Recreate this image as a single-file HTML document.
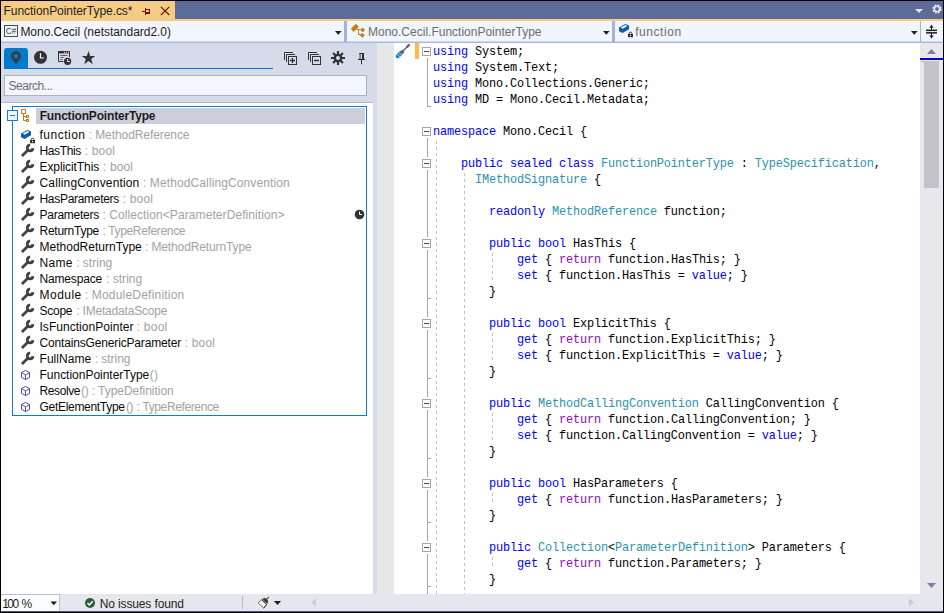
<!DOCTYPE html>
<html lang="en"><head><meta charset="utf-8"><title>FunctionPointerType.cs</title>
<style>
html,body{margin:0;padding:0;}
body{width:944px;height:613px;overflow:hidden;background:#000;position:relative;font-family:'Liberation Sans',sans-serif;font-size:12px;}
#app{position:absolute;left:0;top:0;width:944px;height:613px;overflow:hidden;background:#000;}
#app div,#app span,#app svg{position:absolute;}
.t{white-space:pre;line-height:16px;height:16px;}
/* frame */
#tabstrip{left:1px;top:1px;width:942px;height:18px;background:#5d6b99;}
#tab{left:0;top:0;width:174px;height:18px;background:#f5cc84;}
#tabline{left:1px;top:19px;width:942px;height:2px;background:#f5cc84;}
#nav{left:1px;top:21px;width:942px;height:20px;background:#f1f5fd;}
#navb{left:1px;top:41px;width:942px;height:2px;background:linear-gradient(#e2e9f7,#97aad6);}
.nsep{top:21px;width:3px;height:21px;background:#a3b3d8;}
#panel{left:1px;top:43px;width:376px;height:551px;background:#d6dbe9;}
#treebg{left:1px;top:103px;width:372px;height:491px;background:#fff;}
#treetop{left:1px;top:102px;width:372px;height:1px;background:#b3bacb;}
#ptab{left:4px;top:48px;width:24px;height:21px;background:#007acc;border-radius:3px 3px 0 0;}
#pline{left:4px;top:68px;width:269px;height:1px;background:#007acc;}
#search{left:4px;top:75px;width:361px;height:19px;background:#f3f6fd;border:1px solid #a9b3c6;}
#focus{left:12px;top:106px;width:353px;height:308px;border:1px solid #0e7ad1;}
#sel{left:36px;top:108px;width:329px;height:16px;background:#cccedb;}
#exp{left:7px;top:110px;width:9px;height:9px;border:1px solid #1c7cd5;background:#eef4fc;}
#exp i{position:absolute;left:2px;top:4px;width:5px;height:1px;background:#1c7cd5;}
/* editor */
#emargin{left:377px;top:43px;width:17px;height:551px;background:#e6e7e8;}
#editor{left:394px;top:43px;width:526px;height:551px;background:#fff;}
#chg{left:414px;top:43px;width:6px;height:16px;background:#ffffc8;}
#chg i{position:absolute;left:1px;top:0;width:4px;height:16px;background:#ffb862;}
.cl{left:433px;height:16px;line-height:16px;white-space:pre;font-family:'Liberation Mono',monospace;font-size:11.9px;letter-spacing:-0.14px;color:#000;}
.cl span{position:static !important;}
.k{color:#0000ff}.ty{color:#2b91af}.c{color:#8f08c4}
.ob{left:422px;width:7px;height:7px;border:1px solid #a6a6a6;background:#fff;box-shadow:0 -2px 0 #fff,0 2px 0 #fff;z-index:1;}
.ob i{position:absolute;left:1px;top:3px;width:5px;height:1px;background:#4a4a4a;}
.ov{left:427px;width:1px;background:#a5a5a5;}
.ot{left:427px;width:4px;height:1px;background:#a5a5a5;}
.ig{width:1px;background:repeating-linear-gradient(to bottom,#c2c2c2 0,#c2c2c2 3px,transparent 3px,transparent 6px);}
/* scrollbar */
#vs{left:920px;top:43px;width:23px;height:551px;background:#e8e8ec;}
#vthumb{left:924px;top:61px;width:15px;height:127px;background:#c2c3c9;}
#caret{left:920px;top:58px;width:23px;height:2px;background:#0000cd;}
#omark{left:921px;top:61px;width:4px;height:1px;background:#ffb040;}
/* bottom */
#bottom{left:1px;top:594px;width:942px;height:17px;background:#e6e7ec;}
#zoom{left:1px;top:594px;width:58px;height:16px;background:#fcfdff;border-right:1px solid #b4c0dc;border-top:1px solid #b4c0dc;}
#bsep{left:242px;top:596px;width:1px;height:13px;background:#b9bccb;}
#bline{left:1px;top:611px;width:942px;height:1px;background:#46558c;}
.ic{overflow:visible;}
</style></head><body>
<svg width="0" height="0" style="position:absolute"><defs>
<g id="i-wrench" fill="none" stroke="#424242"><path d="M12.9 6.1 A2.8 2.8 0 1 1 10.1 3.2" stroke-width="2.7"/><path d="M8.3 7.7 L1.9 14.1" stroke-width="2.8"/></g>
<g id="i-cube" fill="none" stroke="#5a4ca6" stroke-width="1" stroke-linejoin="round"><path d="M5.500 4.400 L9.500 6.600 L9.500 11.400 L5.500 13.600 L1.500 11.400 L1.500 6.600 Z M1.500 6.600 L5.500 8.900 L9.500 6.600 M5.500 8.900 L5.500 13.600"/></g>
<g id="i-field"><path d="M1 7.6 L7.4 4 L11 5.6 L11 9.2 L4.6 13 L1 11.2 Z" fill="#0f5bb0"/><path d="M2.7 7.6 L7.4 5 L9.4 5.9 L4.7 8.7 Z" fill="#eef3fb"/><g id="i-lock"><rect x="10" y="14" width="5" height="3.2" fill="#333"/><path d="M11.1 14.2 V13.5 a1.4 1.4 0 0 1 2.8 0 V14.2" fill="none" stroke="#333" stroke-width="1"/><rect x="12" y="15" width="1" height="1.2" fill="#fff"/></g></g>
<g id="i-dd"><path d="M0 0 H6.6 L3.3 3.7 Z"/></g>
</defs></svg>
<div id="app">
<div id="tabstrip"><div id="tab"></div></div>
<div id="tabline"></div>
<div id="nav"></div><div id="navb"></div>
<div class="nsep" style="left:344px"></div><div class="nsep" style="left:612px"></div><div class="nsep" style="left:920px;width:1px"></div>
<div id="panel"></div><div id="treetop"></div><div id="treebg"></div>
<div id="ptab"></div><div id="pline"></div>
<div id="search"></div>
<div id="sel"></div><div id="focus"></div><div id="exp"><i></i></div>
<div id="emargin"></div><div id="editor"></div>
<div id="chg"><i></i></div>
<div class="ob" style="top:47px"><i></i></div>
<div class="ov" style="top:56px;height:51px"></div>
<div class="ot" style="top:106px"></div>
<div class="ob" style="top:127px"><i></i></div>
<div class="ov" style="top:136px;height:467px"></div>
<div class="ob" style="top:159px"><i></i></div>
<div class="ob" style="top:239px"><i></i></div>
<div class="ot" style="top:298px"></div>
<div class="ob" style="top:319px"><i></i></div>
<div class="ot" style="top:378px"></div>
<div class="ob" style="top:399px"><i></i></div>
<div class="ot" style="top:458px"></div>
<div class="ob" style="top:479px"><i></i></div>
<div class="ot" style="top:522px"></div>
<div class="ob" style="top:543px"><i></i></div>
<div class="ot" style="top:586px"></div>
<div class="ig" style="left:436px;top:141px;height:453px"></div>
<div class="ig" style="left:464px;top:173px;height:421px"></div>
<div class="ig" style="left:492px;top:253px;height:28px"></div>
<div class="ig" style="left:492px;top:333px;height:28px"></div>
<div class="ig" style="left:492px;top:413px;height:28px"></div>
<div class="ig" style="left:492px;top:493px;height:12px"></div>
<div class="ig" style="left:492px;top:557px;height:12px"></div>
<div class="cl" style="top:44px"><span class="k">using</span> System;</div>
<div class="cl" style="top:60px"><span class="k">using</span> System.Text;</div>
<div class="cl" style="top:76px"><span class="k">using</span> Mono.Collections.Generic;</div>
<div class="cl" style="top:92px"><span class="k">using</span> MD = Mono.Cecil.Metadata;</div>
<div class="cl" style="top:124px"><span class="k">namespace</span> Mono.Cecil {</div>
<div class="cl" style="top:156px">    <span class="k">public sealed class</span> <span class="ty">FunctionPointerType</span> : <span class="ty">TypeSpecification</span>,</div>
<div class="cl" style="top:172px">      <span class="ty">IMethodSignature</span> {</div>
<div class="cl" style="top:204px">        <span class="k">readonly</span> <span class="ty">MethodReference</span> function;</div>
<div class="cl" style="top:236px">        <span class="k">public bool</span> HasThis {</div>
<div class="cl" style="top:252px">            <span class="k">get</span> { <span class="c">return</span> function.HasThis; }</div>
<div class="cl" style="top:268px">            <span class="k">set</span> { function.HasThis = <span class="k">value</span>; }</div>
<div class="cl" style="top:284px">        }</div>
<div class="cl" style="top:316px">        <span class="k">public bool</span> ExplicitThis {</div>
<div class="cl" style="top:332px">            <span class="k">get</span> { <span class="c">return</span> function.ExplicitThis; }</div>
<div class="cl" style="top:348px">            <span class="k">set</span> { function.ExplicitThis = <span class="k">value</span>; }</div>
<div class="cl" style="top:364px">        }</div>
<div class="cl" style="top:396px">        <span class="k">public</span> <span class="ty">MethodCallingConvention</span> CallingConvention {</div>
<div class="cl" style="top:412px">            <span class="k">get</span> { <span class="c">return</span> function.CallingConvention; }</div>
<div class="cl" style="top:428px">            <span class="k">set</span> { function.CallingConvention = <span class="k">value</span>; }</div>
<div class="cl" style="top:444px">        }</div>
<div class="cl" style="top:476px">        <span class="k">public bool</span> HasParameters {</div>
<div class="cl" style="top:492px">            <span class="k">get</span> { <span class="c">return</span> function.HasParameters; }</div>
<div class="cl" style="top:508px">        }</div>
<div class="cl" style="top:540px">        <span class="k">public</span> <span class="ty">Collection</span>&lt;<span class="ty">ParameterDefinition</span>&gt; Parameters {</div>
<div class="cl" style="top:556px">            <span class="k">get</span> { <span class="c">return</span> function.Parameters; }</div>
<div class="cl" style="top:572px">        }</div>
<div id="vs"></div><div id="vthumb"></div><div id="caret"></div><div id="omark"></div>
<div id="bottom"></div><div id="zoom"></div><div id="bsep"></div><div id="bline"></div>
<!-- icons -->
<svg id="icons" style="left:0;top:0" width="944" height="613" viewBox="0 0 944 613">
 <!-- title tab pin + close -->
 <g fill="#6a1215"><rect x="142" y="11" width="3" height="1"/><rect x="145" y="8" width="1" height="7"/><rect x="146" y="9" width="4" height="1"/><rect x="149" y="9" width="1" height="5"/><rect x="146" y="12" width="4" height="2"/></g>
 <path d="M160.9 6.9 L169.3 15 M169.3 6.9 L160.9 15" stroke="#6a1215" stroke-width="1.15" fill="none"/>
 <!-- tabstrip right: dropdown + gear -->
 <path d="M915 9 H923 L919 13 Z" fill="#e3e7f3"/>
 <g transform="translate(937,9)" fill="none" stroke="#e9ecf6"><circle r="3.4" stroke-width="2.4" stroke-dasharray="1.7 0.97" /><circle r="2.6" stroke-width="1.4"/></g>
 <!-- nav: C# icon -->
 <rect x="4.500" y="25.500" width="13" height="11" fill="#f2f3fb" stroke="#3d5c3d"/>
 <text x="5.800" y="34.100" font-family="Liberation Sans, sans-serif" font-size="9.300" fill="#3c3c3c" textLength="10.400" lengthAdjust="spacingAndGlyphs">C#</text>
 <!-- nav dropdown arrows -->
 <g fill="#1e1e1e"><use href="#i-dd" x="335" y="31"/><use href="#i-dd" x="603" y="31"/><use href="#i-dd" x="911" y="31"/></g>
 <!-- nav class icon -->
 <g fill="#c67d17" stroke="none">
  <path d="M350.8 28.8 L355.9 23.8 L358.9 26.8 L353.7 32 Z"/>
  <path d="M362.7 27.6 L365 29.9 L362.7 32.2 L360.4 29.9 Z"/>
  <path d="M362.4 32.9 L364.8 35.3 L362.4 37.7 L360 35.3 Z"/>
  <rect x="356.500" y="29" width="5" height="1"/><rect x="358" y="29" width="1" height="6"/><rect x="358" y="34" width="3.500" height="1"/>
 </g>
 <!-- nav field icon -->
 <g transform="translate(618,20)"><use href="#i-field"/></g>
 <!-- split button icon -->
 <g fill="#1e1e1e"><rect x="926" y="29.600" width="11" height="1.500"/><rect x="926" y="32.100" width="11" height="1.500"/><rect x="931" y="26" width="1" height="4"/><rect x="931" y="33" width="1" height="4.500"/><path d="M929.300 27.700 L931.500 24.800 L933.700 27.700 Z M929.300 35.500 L931.500 38.400 L933.700 35.500 Z"/></g>
 <!-- panel toolbar: location pin -->
 <path d="M16 51 a5 5 0 0 1 5 5 c0 2.6 -2.6 5 -5 8 c-2.4 -3 -5 -5.4 -5 -8 a5 5 0 0 1 5 -5 Z M16 54 a2.3 2.3 0 1 0 0.001 0 Z" fill="#3b3b40" fill-rule="evenodd"/>
 <!-- clock -->
 <circle cx="40.5" cy="57.3" r="6.5" fill="#333337"/><path d="M40.5 53 V58 H44" fill="none" stroke="#f0f0f4" stroke-width="1.2"/>
 <!-- window clock -->
 <path d="M58.5 51.5 H69.5 V57 M58.5 51.5 V61.5 H63.5" fill="none" stroke="#333337"/><rect x="58" y="51" width="12" height="2.4" fill="#333337"/>
 <g fill="#e8e8ee"><rect x="64" y="51.8" width="1" height="1"/><rect x="66" y="51.8" width="1" height="1"/><rect x="68" y="51.8" width="1" height="1"/></g>
 <path d="M60.5 55.5 H67.5 M60.5 57.5 H63.5 M60.5 59.5 H62.5" stroke="#7b4a86" fill="none"/>
 <circle cx="67.6" cy="61.3" r="3.6" fill="#333337"/><path d="M67.6 59 V61.6 H69.8" fill="none" stroke="#f0f0f4" stroke-width="1"/>
 <!-- star -->
 <path d="M88.5 51 L90.2 56 L95.3 56 L91.2 59.1 L92.7 64.2 L88.5 61.1 L84.3 64.2 L85.8 59.1 L81.7 56 L86.8 56 Z" fill="#333337"/>
 <!-- expand all / collapse all -->
 <g fill="none" stroke="#333337" stroke-width="1">
  <path d="M284.5 60 V52.5 H293"/><path d="M286.5 62 V54.5 H295"/><rect x="288.5" y="56.5" width="8" height="8"/><path d="M290 60.500 H295 M292.500 58 V63" stroke-width="1.300"/>
  <path d="M308.5 60 V52.5 H317"/><path d="M310.5 62 V54.5 H319"/><rect x="312.5" y="56.5" width="8" height="8"/><path d="M314 60.500 H319" stroke-width="1.500"/>
 </g>
 <!-- gear -->
 <g transform="translate(338,58)"><g stroke="#333337" stroke-width="2.2"><path d="M0 -7 V7 M-7 0 H7 M-4.95 -4.95 L4.95 4.95 M-4.95 4.95 L4.95 -4.95"/></g><circle r="4.3" fill="#333337"/><circle r="2" fill="#d6dbe9"/></g>
 <!-- pin -->
 <g fill="#2d2d31"><rect x="359.300" y="53" width="4.700" height="1"/><rect x="359.600" y="53" width="0.900" height="6"/><rect x="362" y="53" width="2" height="6"/><rect x="358" y="59" width="7" height="1"/><rect x="361" y="60" width="1" height="4.300"/></g>
 <!-- class icon in tree -->
 <g fill="none" stroke="#c27d1a" stroke-width="1"><rect x="21.5" y="109.500" width="4" height="4"/><path d="M23.5 114 V120.500 H26 M23.5 116.500 H26"/><rect x="26.500" y="115.500" width="2" height="2"/><rect x="26.500" y="119.500" width="2" height="2"/></g>
 <!-- recent clock in tree -->
 <circle cx="359.5" cy="214.500" r="4.800" fill="#333"/><path d="M359.5 211.500 V214.500 H362" fill="none" stroke="#fff" stroke-width="1"/>
 <!-- screwdriver -->
 <path d="M397.700 56.200 L400.600 53.200" stroke="#1b86c5" stroke-width="4.200" stroke-linecap="round" fill="none"/>
 <path d="M398.200 55.700 L400.900 52.900" stroke="#b9c4ee" stroke-width="4.200" stroke-dasharray="0.700 1.700" fill="none"/>
 <path d="M403 51 L407.200 46.800" stroke="#666" stroke-width="1.400" fill="none"/><path d="M407.300 46.700 L408.900 45.100" stroke="#666" stroke-width="2.500" stroke-linecap="round" fill="none"/>
 <path d="M401.500 52.700 L403.300 50.900" stroke="#606060" stroke-width="3.400" fill="none"/>
 <!-- scrollbar arrows -->
 <path d="M927 54 L931.500 49 L936 54 Z" fill="#86799f"/><path d="M927 583 L931.500 588 L936 583 Z" fill="#86799f"/>
 <!-- bottom bar -->
 <g fill="#1e1e1e"><use href="#i-dd" x="50.500" y="601.500"/><path d="M273.900 600.900 H281.100 L277.500 605 Z"/></g>
 <circle cx="90" cy="603" r="5" fill="#2f5d3a"/><path d="M87.500 603 L89.400 605 L92.800 601.200" fill="none" stroke="#fff" stroke-width="1.500"/>
 <path d="M311 602.500 L316 598.500 V606.500 Z" fill="#cccdd4"/><path d="M914 602.500 L909 598.500 V606.500 Z" fill="#c6c9d6"/>
 <!-- brush -->
 <g transform="translate(264,602.200) rotate(42.500)"><path d="M0 -7.200 V-4" stroke="#3a3a3a" stroke-width="1" fill="none"/><path d="M-3.300 -1 A3.300 3.300 0 0 1 3.300 -1 Z" fill="#3c3c3c"/><path d="M-3.500 0 H3.500 L3.900 4.500 H-3.900 Z" fill="#fbfbfb" stroke="#6b3f7a" stroke-width="0.800"/><path d="M3.500 0 L3.900 4.500" stroke="#3c3c3c" stroke-width="0.900"/><path d="M-3.600 -0.300 H3.600" stroke="#3c3c3c" stroke-width="0.900"/></g>
</svg>
<svg class="ic" style="left:20px;top:126px" width="17" height="16" viewBox="0 0 17 16"><use href="#i-field"/></svg>
<svg class="ic" style="left:20px;top:142px" width="16" height="16" viewBox="0 0 16 16"><use href="#i-wrench"/></svg>
<svg class="ic" style="left:20px;top:158px" width="16" height="16" viewBox="0 0 16 16"><use href="#i-wrench"/></svg>
<svg class="ic" style="left:20px;top:174px" width="16" height="16" viewBox="0 0 16 16"><use href="#i-wrench"/></svg>
<svg class="ic" style="left:20px;top:190px" width="16" height="16" viewBox="0 0 16 16"><use href="#i-wrench"/></svg>
<svg class="ic" style="left:20px;top:206px" width="16" height="16" viewBox="0 0 16 16"><use href="#i-wrench"/></svg>
<svg class="ic" style="left:20px;top:222px" width="16" height="16" viewBox="0 0 16 16"><use href="#i-wrench"/></svg>
<svg class="ic" style="left:20px;top:238px" width="16" height="16" viewBox="0 0 16 16"><use href="#i-wrench"/></svg>
<svg class="ic" style="left:20px;top:254px" width="16" height="16" viewBox="0 0 16 16"><use href="#i-wrench"/></svg>
<svg class="ic" style="left:20px;top:270px" width="16" height="16" viewBox="0 0 16 16"><use href="#i-wrench"/></svg>
<svg class="ic" style="left:20px;top:286px" width="16" height="16" viewBox="0 0 16 16"><use href="#i-wrench"/></svg>
<svg class="ic" style="left:20px;top:302px" width="16" height="16" viewBox="0 0 16 16"><use href="#i-wrench"/></svg>
<svg class="ic" style="left:20px;top:318px" width="16" height="16" viewBox="0 0 16 16"><use href="#i-wrench"/></svg>
<svg class="ic" style="left:20px;top:334px" width="16" height="16" viewBox="0 0 16 16"><use href="#i-wrench"/></svg>
<svg class="ic" style="left:20px;top:350px" width="16" height="16" viewBox="0 0 16 16"><use href="#i-wrench"/></svg>
<svg class="ic" style="left:20px;top:366px" width="16" height="16" viewBox="0 0 16 16"><use href="#i-cube"/></svg>
<svg class="ic" style="left:20px;top:382px" width="16" height="16" viewBox="0 0 16 16"><use href="#i-cube"/></svg>
<svg class="ic" style="left:20px;top:398px" width="16" height="16" viewBox="0 0 16 16"><use href="#i-cube"/></svg>
<span class="t" id="t0" style="left:3.50px;top:3.0px;color:#1e1e1e;font-size:12px;letter-spacing:-0.049px;">FunctionPointerType.cs*</span>
<span class="t" id="t1" style="left:20.40px;top:23.5px;color:#1e1e1e;font-size:12px;letter-spacing:-0.032px;">Mono.Cecil (netstandard2.0)</span>
<span class="t" id="t2" style="left:368.00px;top:23.5px;color:#6d6d6d;font-size:12px;letter-spacing:0.003px;">Mono.Cecil.FunctionPointerType</span>
<span class="t" id="t3" style="left:635.20px;top:23.5px;color:#6d6d6d;font-size:12px;letter-spacing:0.553px;">function</span>
<span class="t" id="t4" style="left:8.50px;top:77.5px;color:#6d6d6d;font-size:12px;letter-spacing:-0.454px;">Search...</span>
<span class="t" id="t5" style="left:2.20px;top:596.0px;color:#1e1e1e;font-size:12px;letter-spacing:-1.566px;">100</span>
<span class="t" id="t6" style="left:21.60px;top:596.0px;color:#1e1e1e;font-size:12px;letter-spacing:0.228px;">%</span>
<span class="t" id="t7" style="left:99.70px;top:596.0px;color:#1e1e1e;font-size:12px;letter-spacing:-0.126px;">No issues found</span>
<span class="t" id="t8" style="left:39.70px;top:108.0px;color:#1e1e1e;font-size:12px;font-weight:bold;letter-spacing:-0.184px;">FunctionPointerType</span>
<span class="t" id="t9" style="left:39.50px;top:126.5px;color:#0a0a0a;font-size:12px;letter-spacing:0.496px;">function</span>
<span class="t" id="t10" style="left:88.70px;top:126.5px;color:#a2a2a2;font-size:12px;letter-spacing:-0.079px;">: MethodReference</span>
<span class="t" id="t11" style="left:39.50px;top:142.5px;color:#0a0a0a;font-size:12px;letter-spacing:-0.378px;">HasThis</span>
<span class="t" id="t12" style="left:84.70px;top:142.5px;color:#a2a2a2;font-size:12px;letter-spacing:0.188px;">: bool</span>
<span class="t" id="t13" style="left:39.50px;top:158.5px;color:#0a0a0a;font-size:12px;letter-spacing:-0.085px;">ExplicitThis</span>
<span class="t" id="t14" style="left:102.95px;top:158.5px;color:#a2a2a2;font-size:12px;letter-spacing:0.138px;">: bool</span>
<span class="t" id="t15" style="left:39.50px;top:174.5px;color:#0a0a0a;font-size:12px;letter-spacing:0.146px;">CallingConvention</span>
<span class="t" id="t16" style="left:142.95px;top:174.5px;color:#a2a2a2;font-size:12px;letter-spacing:0.113px;">: MethodCallingConvention</span>
<span class="t" id="t17" style="left:39.50px;top:190.5px;color:#0a0a0a;font-size:12px;letter-spacing:-0.302px;">HasParameters</span>
<span class="t" id="t18" style="left:122.70px;top:190.5px;color:#a2a2a2;font-size:12px;letter-spacing:0.188px;">: bool</span>
<span class="t" id="t19" style="left:39.50px;top:206.5px;color:#0a0a0a;font-size:12px;letter-spacing:-0.253px;">Parameters</span>
<span class="t" id="t20" style="left:102.45px;top:206.5px;color:#a2a2a2;font-size:12px;letter-spacing:0.082px;">: Collection&lt;ParameterDefinition&gt;</span>
<span class="t" id="t21" style="left:39.50px;top:222.5px;color:#0a0a0a;font-size:12px;letter-spacing:-0.255px;">ReturnType</span>
<span class="t" id="t22" style="left:102.45px;top:222.5px;color:#a2a2a2;font-size:12px;letter-spacing:-0.342px;">: TypeReference</span>
<span class="t" id="t23" style="left:39.50px;top:238.5px;color:#0a0a0a;font-size:12px;letter-spacing:0.013px;">MethodReturnType</span>
<span class="t" id="t24" style="left:144.95px;top:238.5px;color:#a2a2a2;font-size:12px;letter-spacing:-0.114px;">: MethodReturnType</span>
<span class="t" id="t25" style="left:39.50px;top:254.5px;color:#0a0a0a;font-size:12px;letter-spacing:0.328px;">Name</span>
<span class="t" id="t26" style="left:76.20px;top:254.5px;color:#a2a2a2;font-size:12px;letter-spacing:0.005px;">: string</span>
<span class="t" id="t27" style="left:39.50px;top:270.5px;color:#0a0a0a;font-size:12px;letter-spacing:-0.160px;">Namespace</span>
<span class="t" id="t28" style="left:105.95px;top:270.5px;color:#a2a2a2;font-size:12px;letter-spacing:0.041px;">: string</span>
<span class="t" id="t29" style="left:39.50px;top:286.5px;color:#0a0a0a;font-size:12px;letter-spacing:0.478px;">Module</span>
<span class="t" id="t30" style="left:84.70px;top:286.5px;color:#a2a2a2;font-size:12px;letter-spacing:0.205px;">: ModuleDefinition</span>
<span class="t" id="t31" style="left:39.50px;top:302.5px;color:#0a0a0a;font-size:12px;letter-spacing:-0.258px;">Scope</span>
<span class="t" id="t32" style="left:76.20px;top:302.5px;color:#a2a2a2;font-size:12px;letter-spacing:-0.184px;">: IMetadataScope</span>
<span class="t" id="t33" style="left:39.50px;top:318.5px;color:#0a0a0a;font-size:12px;letter-spacing:0.038px;">IsFunctionPointer</span>
<span class="t" id="t34" style="left:136.70px;top:318.5px;color:#a2a2a2;font-size:12px;letter-spacing:0.238px;">: bool</span>
<span class="t" id="t35" style="left:39.50px;top:334.5px;color:#0a0a0a;font-size:12px;letter-spacing:-0.159px;">ContainsGenericParameter</span>
<span class="t" id="t36" style="left:184.70px;top:334.5px;color:#a2a2a2;font-size:12px;letter-spacing:0.188px;">: bool</span>
<span class="t" id="t37" style="left:39.50px;top:350.5px;color:#0a0a0a;font-size:12px;letter-spacing:0.056px;">FullName</span>
<span class="t" id="t38" style="left:94.70px;top:350.5px;color:#a2a2a2;font-size:12px;letter-spacing:-0.031px;">: string</span>
<span class="t" id="t39" style="left:39.50px;top:366.5px;color:#0a0a0a;font-size:12px;letter-spacing:-0.017px;">FunctionPointerType</span>
<span class="t" id="t40" style="left:149.70px;top:366.5px;color:#a2a2a2;font-size:12px;letter-spacing:0.300px;">()</span>
<span class="t" id="t41" style="left:39.50px;top:382.5px;color:#0a0a0a;font-size:12px;letter-spacing:-0.393px;">Resolve</span>
<span class="t" id="t42" style="left:80.95px;top:382.5px;color:#a2a2a2;font-size:12px;letter-spacing:-0.200px;">()</span>
<span class="t" id="t43" style="left:91.70px;top:382.5px;color:#a2a2a2;font-size:12px;letter-spacing:-0.030px;">: TypeDefinition</span>
<span class="t" id="t44" style="left:39.50px;top:398.5px;color:#0a0a0a;font-size:12px;letter-spacing:-0.299px;">GetElementType</span>
<span class="t" id="t45" style="left:125.95px;top:398.5px;color:#a2a2a2;font-size:12px;letter-spacing:-0.450px;">()</span>
<span class="t" id="t46" style="left:136.70px;top:398.5px;color:#a2a2a2;font-size:12px;letter-spacing:-0.378px;">: TypeReference</span>
</div>
</body></html>
